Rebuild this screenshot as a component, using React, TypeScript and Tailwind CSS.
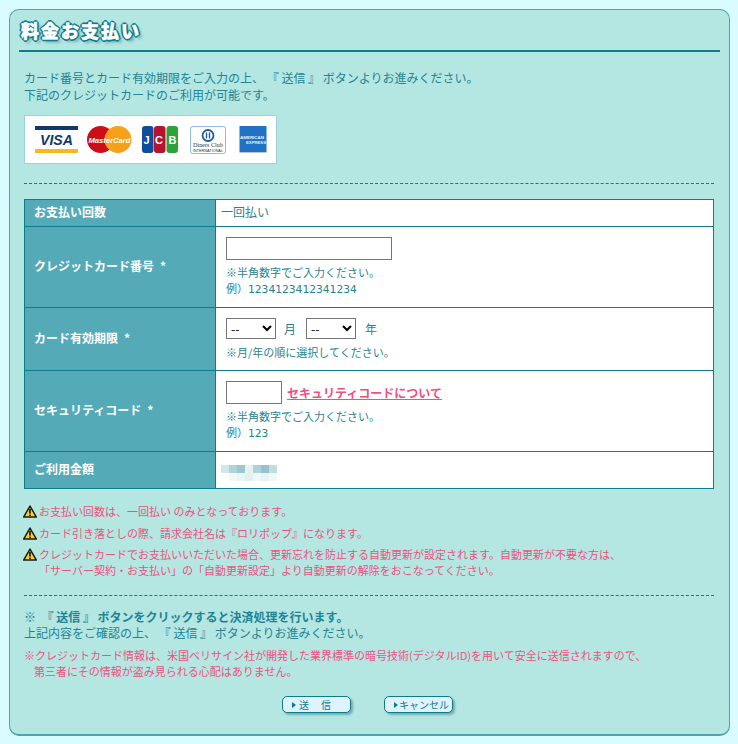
import React from "react";

function Warn() {
  return (
    <svg width="14" height="13" viewBox="0 0 13 12" className="shrink-0 -ml-[1px] -mr-[1px]">
      <path d="M6.5 0.9 L12.4 11.2 L0.6 11.2 Z" fill="#ffd21e" stroke="#1c1c1c" strokeWidth="1.4" strokeLinejoin="round" />
      <rect x="5.7" y="3.6" width="1.6" height="4.4" fill="#1c1c1c" />
      <rect x="5.7" y="8.8" width="1.6" height="1.5" fill="#1c1c1c" />
    </svg>
  );
}

function Cards() {
  return (
    <div className="flex items-center w-[253px] h-[49px] bg-white border border-[#9fcfdc] pl-[10px]">
      <svg width="43" height="27" viewBox="0 0 43 27" className="mr-[9px]">
        <rect x="0" y="0" width="43" height="4" fill="#14386e" />
        <rect x="0" y="23" width="43" height="4" fill="#fbb817" />
        <text x="21.5" y="19" textAnchor="middle" fontFamily="Liberation Sans" fontWeight="700" fontStyle="italic" fontSize="14.500" textLength="33" lengthAdjust="spacingAndGlyphs" fill="#14386e">VISA</text>
      </svg>
      <svg width="45" height="27" viewBox="0 0 45 27" className="mr-[10px]">
        <circle cx="13.5" cy="13.5" r="13.5" fill="#cc0f16" />
        <circle cx="31" cy="13.5" r="13.5" fill="#f9a01b" />
        <text x="22.5" y="16.500" textAnchor="middle" fontFamily="Liberation Sans" fontWeight="700" fontStyle="italic" fontSize="8" textLength="42" lengthAdjust="spacingAndGlyphs" fill="#fff">MasterCard</text>
      </svg>
      <svg width="36" height="27" viewBox="0 0 36 27" className="mr-[12px]">
        <rect x="0" y="0" width="11.500" height="27" rx="3" fill="#0f4d9c" />
        <rect x="12" y="0" width="11.500" height="27" rx="3" fill="#b6142e" />
        <rect x="24.500" y="0" width="11.500" height="27" rx="3" fill="#2fa13a" />
        <text x="18" y="18" textAnchor="middle" fontFamily="Liberation Sans" fontWeight="700" fontSize="11" textLength="33" fill="#fff">JCB</text>
      </svg>
      <svg width="36" height="28" viewBox="0 0 36 28" className="mr-[13px]">
        <rect x="0.500" y="0.500" width="35" height="27" rx="2" fill="#fff" stroke="#8fbbe0" />
        <circle cx="18" cy="9.500" r="5.500" fill="#fff" stroke="#1d5a9e" strokeWidth="1.800" />
        <rect x="15.800" y="6.500" width="1.400" height="6" fill="#1d5a9e" />
        <rect x="18.800" y="6.500" width="1.400" height="6" fill="#1d5a9e" />
        <text x="18" y="21" textAnchor="middle" fontFamily="Liberation Serif" fontSize="6.500" textLength="30" lengthAdjust="spacingAndGlyphs" fill="#333">Diners Club</text>
        <text x="18" y="25.500" textAnchor="middle" fontFamily="Liberation Sans" fontSize="3" textLength="30" lengthAdjust="spacingAndGlyphs" fill="#333">INTERNATIONAL</text>
      </svg>
      <svg width="28" height="27" viewBox="0 0 28 27">
        <rect x="0.500" y="0" width="27" height="26" fill="#1f72c4" />
        <rect x="0.500" y="26" width="27" height="1" fill="#b9c6d2" />
        <text x="13" y="12.500" textAnchor="middle" fontFamily="Liberation Sans" fontWeight="700" fontSize="4" textLength="24" lengthAdjust="spacingAndGlyphs" fill="#e6f2fb">AMERICAN</text>
        <text x="17" y="18" textAnchor="middle" fontFamily="Liberation Sans" fontWeight="700" fontSize="4" textLength="20" lengthAdjust="spacingAndGlyphs" fill="#e6f2fb">EXPRESS</text>
      </svg>
    </div>
  );
}

const mosaic = ["#d3e6e8","#add4d9","#9cc8ce","#e6f1f2","#add2d8","#96c3ca","#c2dde2","#ffffff","#f2f8f9","#eaf4f5","#e3eff0","#f0f7f8","#e8f2f4","#eff7f8"];

function Row({ label, h, children }: { label: React.ReactNode; h: string; children: React.ReactNode }) {
  return (
    <div className={`flex border-b border-[#0e7c8a] ${h}`}>
      <div className="w-[191px] shrink-0 bg-[#55aab8] border-r border-[#0e7c8a] flex items-center pl-[9px] pb-[4px] text-white font-bold text-[12px]">{label}</div>
      {children}
    </div>
  );
}

function Star() {
  return <span className="ml-[6px]">*</span>;
}

function Btn({ children }: { children: React.ReactNode }) {
  return (
    <button className="flex items-center w-[69px] h-[17px] rounded-[5px] border border-[#0e7c8a] bg-[#def3fe] text-[#0e7c8a] text-[10px] leading-none whitespace-nowrap shadow-[2px_2px_2px_rgba(40,110,120,0.45)] pl-[9px]">
      <span className="w-0 h-0 border-y-[3px] border-y-transparent border-l-[4px] border-l-[#0e7c8a] mr-[1px]" />
      {children}
    </button>
  );
}

function Example({ children }: { children: React.ReactNode }) {
  return (
    <p>例）<span className="font-['DejaVu_Sans'] text-[10.7px]">{children}</span></p>
  );
}

export default function App() {
  return (
    <div className="w-[738px] h-[744px] bg-[#d9fdff] pt-[9px] pl-[9px] text-[12px] leading-[17px] text-[#1f8493] font-['Noto_Sans_CJK_JP','Noto_Sans',sans-serif]">
      <div className="w-[721px] h-[727px] bg-[#b4e6e2] border border-[#4fa5a8] border-b-[2px] rounded-[10px] px-[9px] pt-[8px]">
        <div className="h-[34px] border-b-2 border-[#0e7c8a] pl-[2px] text-[18px] leading-[24px] font-black tracking-[2px] text-white [-webkit-text-stroke:0.5px_white] [text-shadow:-2px_0_#0e7c8a,2px_0_#0e7c8a,0_-2px_#0e7c8a,0_2px_#0e7c8a,-1px_-1px_#0e7c8a,1px_1px_#0e7c8a,-1px_1px_#0e7c8a,1px_-1px_#0e7c8a,3px_3px_3px_rgba(40,110,120,0.5)]">料金お支払い</div>
        <div className="ml-[5px] mt-[17px] w-[690px]">
          <p>カード番号とカード有効期限をご入力の上、 『 送信 』 ボタンよりお進みください。</p>
          <p>下記のクレジットカードのご利用が可能です。</p>
          <div className="mt-[12px]"><Cards /></div>
          <div className="mt-[19px] border-t border-dashed border-[#0e7c8a]" />
          <div className="mt-[15px] border border-b-0 border-[#0e7c8a] bg-white">
            <Row label="お支払い回数" h="h-[27px]">
              <div className="flex items-center pl-[5px] pb-[4px] text-[#2f7f8a]">一回払い</div>
            </Row>
            <Row label={<>クレジットカード番号<Star /></>} h="h-[81px]">
              <div className="pl-[10px] pt-[10px] text-[11px] leading-[16px]">
                <input className="block w-[166px] h-[23px] border border-[#767676] bg-white" />
                <p className="mt-[4px]">※半角数字でご入力ください。</p>
                <Example>1234123412341234</Example>
              </div>
            </Row>
            <Row label={<>カード有効期限<Star /></>} h="h-[63px]">
              <div className="pl-[10px] pt-[10px] text-[11px] leading-[16px]">
                <div className="flex items-center text-[12px]">
                  <select className="w-[50px] h-[21px] rounded-none border border-[#767676] bg-white text-black text-[12px]"><option>--</option></select>
                  <span className="ml-[8px] mr-[10px]">月</span>
                  <select className="w-[50px] h-[21px] rounded-none border border-[#767676] bg-white text-black text-[12px]"><option>--</option></select>
                  <span className="ml-[9px]">年</span>
                </div>
                <p className="mt-[5px]">※月/年の順に選択してください。</p>
              </div>
            </Row>
            <Row label={<>セキュリティコード<Star /></>} h="h-[81px]">
              <div className="pl-[10px] pt-[10px] text-[11px] leading-[16px]">
                <div className="flex items-center text-[12px]">
                  <input className="block w-[56px] h-[23px] border border-[#767676] bg-white" />
                  <a className="ml-[5px] font-bold text-[#f0507f] underline">セキュリティコードについて</a>
                </div>
                <p className="mt-[4px]">※半角数字でご入力ください。</p>
                <Example>123</Example>
              </div>
            </Row>
            <Row label="ご利用金額" h="h-[37px]">
              <div className="ml-[5px] mt-[13px] grid grid-cols-[repeat(7,8px)] grid-rows-[repeat(2,8px)] h-[16px]">
                {mosaic.map((c, i) => (
                  <div key={i} style={{ backgroundColor: c }} />
                ))}
              </div>
            </Row>
          </div>
          <div className="mt-[14px] text-[#f0507f] text-[11px] leading-[17px] flex flex-col gap-[5px]">
            <div className="flex items-center gap-[3px]"><Warn /><span>お支払い回数は、一回払い のみとなっております。</span></div>
            <div className="flex items-center gap-[3px]"><Warn /><span>カード引き落としの際、請求会社名は『ロリポップ』になります。</span></div>
            <div className="flex items-start gap-[3px] -mt-[1px]">
              <div className="pt-[2px]"><Warn /></div>
              <span className="leading-[16px]">クレジットカードでお支払いいただいた場合、更新忘れを防止する自動更新が設定されます。自動更新が不要な方は、<br />「サーバー契約・お支払い」の「自動更新設定」より自動更新の解除をおこなってください。</span>
            </div>
          </div>
          <div className="mt-[17px] border-t border-dashed border-[#0e7c8a]" />
          <p className="mt-[13px] font-bold leading-[16px]">※&nbsp;&nbsp;『 送信 』 ボタンをクリックすると決済処理を行います。</p>
          <p className="leading-[16px]">上記内容をご確認の上、 『 送信 』 ボタンよりお進みください。</p>
          <p className="mt-[6px] text-[#f0507f] text-[11px] leading-[16px]">※クレジットカード情報は、米国ベリサイン社が開発した業界標準の暗号技術(デジタルID)を用いて安全に送信されますので、<br /><span className="ml-[10px]">第三者にその情報が盗み見られる心配はありません。</span></p>
          <div className="mt-[17px] flex justify-center gap-[33px] pr-[3px]">
            <Btn><span className="ml-[2px] tracking-[1px]">送　信</span></Btn>
            <Btn><span>キャンセル</span></Btn>
          </div>
        </div>
      </div>
    </div>
  );
}
